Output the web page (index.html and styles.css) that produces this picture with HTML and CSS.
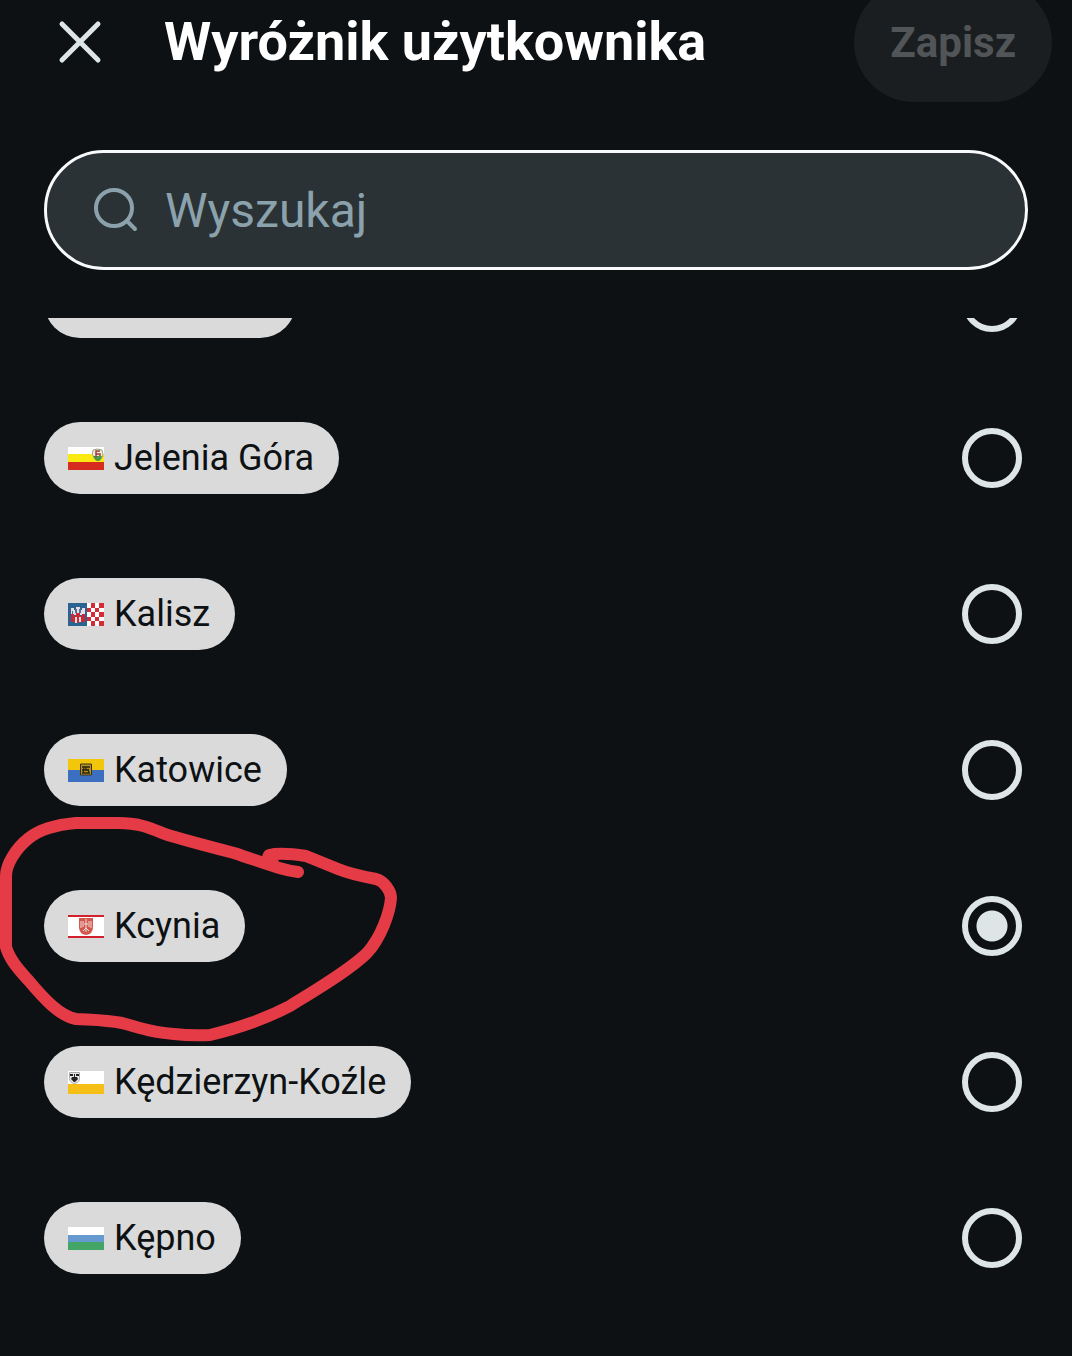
FILE: index.html
```
<!DOCTYPE html>
<html lang="pl">
<head>
    <meta charset="UTF-8">
    <meta name="viewport" content="width=device-width, initial-scale=1.0">
    <title>Wyróżnik użytkownika</title>
    <link rel="stylesheet" href="styles.css">
</head>
<body>
    <header class="header">
        <button type="button" class="close" aria-label="Zamknij">
            <svg width="44" height="44" viewBox="0 0 44 44"><path d="M4 4L40 40M40 4L4 40"/></svg>
        </button>
        <h1 class="title">Wyróżnik użytkownika</h1>
        <button type="submit" form="flair-form" class="save" disabled>Zapisz</button>
    </header>
    <label class="search">
        <svg class="search-icon" width="46" height="46" viewBox="0 0 46 46"><circle cx="21" cy="21" r="18"/><path d="M34 34L42 42"/></svg>
        <input type="search" class="search-input" placeholder="Wyszukaj" aria-label="Wyszukaj">
    </label>
    <form id="flair-form" class="flairs">
        <ul class="flair-list">
            <li class="flair">
                <label class="chip chip-blank" for="flair-0"></label>
                <input type="radio" class="radio" id="flair-0" name="flair">
            </li>
            <li class="flair">
                <label class="chip" for="flair-1">
                    <svg class="flag" viewBox="0 0 36 23">
                        <rect width="36" height="8" fill="#fff"/>
                        <rect y="7" width="36" height="9" fill="#fbea12"/>
                        <rect y="15" width="36" height="8" fill="#d62c20"/>
                        <path d="M25 3q4-2 9 0 2 6-1 9-3 3-6 0-4-4-2-9z" fill="#eef0dc" stroke="#9aa383"/>
                        <path d="M25 9h9q-1 5-4 5t-5-5z" fill="#4c9a45"/>
                        <path d="M28 10V4h4M28 7h4v2" fill="none" stroke="#a23a3a" stroke-width="1.5"/>
                    </svg>
                    Jelenia Góra
                </label>
                <input type="radio" class="radio" id="flair-1" name="flair">
            </li>
            <li class="flair">
                <label class="chip" for="flair-2">
                    <svg class="flag" viewBox="0 0 36 23">
                        <rect width="36" height="23" fill="#fff"/>
                        <rect width="19" height="23" fill="#2b6490"/>
                        <path d="M3 5h3v2h2V4h4v3h2V5h3v7H3z" fill="#e7dde2"/>
                        <path d="M3 11h3v2h2v-3h4v3h2v-2h3v8h-4v-5h-2v6H9v-6H7v5H3z" fill="#cc2936"/>
                        <path d="M7 14h2v6H7zM11 14h2v5h-2z" fill="#eadfe3"/>
                        <path d="M7 6h2v4H7zM11 6h2v4h-2zM4 8h1v3H4z" fill="#4c7296"/>
                        <path d="M23 0h4v5h-4zM31 0h5v5h-5zM19 5h4v4h-4zM27 5h4v4h-4zM23 9h4v5h-4zM31 9h5v5h-5zM19 14h4v4h-4zM27 14h4v4h-4zM23 18h4v5h-4zM31 18h5v5h-5z" fill="#d52b37"/>
                    </svg>
                    Kalisz
                </label>
                <input type="radio" class="radio" id="flair-2" name="flair">
            </li>
            <li class="flair">
                <label class="chip" for="flair-3">
                    <svg class="flag" viewBox="0 0 36 23">
                        <rect width="36" height="12" fill="#f2c60b"/>
                        <rect y="11" width="36" height="12" fill="#3d6fc0"/>
                        <path d="M12.5 5h11v11h-11z" fill="#b5921d" stroke="#3a3218"/>
                        <path d="M14 8h8M16 8l-1 6M18 8v4M14 11h7M20 10l1 4M14 14h8" fill="none" stroke="#2b2614" stroke-width="1.3"/>
                    </svg>
                    Katowice
                </label>
                <input type="radio" class="radio" id="flair-3" name="flair">
            </li>
            <li class="flair">
                <label class="chip" for="flair-4">
                    <svg class="flag" viewBox="0 0 36 23">
                        <rect width="36" height="23" fill="#fff"/>
                        <rect width="36" height="2" fill="#d3202d"/>
                        <rect y="21" width="36" height="2" fill="#d3202d"/>
                        <path d="M11 3h14v9q0 7-7 8-7-1-7-8z" fill="#d2574d"/>
                        <path d="M13 6v7M15 6v6M21 6v6M23 6v7M18 4v13M15 16l3-3 3 3M16 9h4" fill="none" stroke="#f3dfdc"/>
                    </svg>
                    Kcynia
                </label>
                <input type="radio" class="radio" id="flair-4" name="flair" checked>
                <!-- hand-drawn loop -->
                <svg class="marker" width="420" height="250" viewBox="0 0 420 250">
                    <path d="M298 72C282 70 270 65 234 53C207 46 177 38 165 34C150 28 140 23 118 23H76C53 25 39 30 29 38C15 49 6 65 6 76V147C10 161 21 172 29 181C45 200 60 216 76 219C92 220 106 220 122 223C144 229 151 232 174 234Q191 236 210 235C239 228 265 219 290 206C314 191 350 170 367 153C381 138 390 112 391 98C391 91 384 81 376 79C360 76 350 74 338 69L306 56C293 54 278 53 269 55Q266 60 273 63"/>
                </svg>
            </li>
            <li class="flair">
                <label class="chip" for="flair-5">
                    <svg class="flag" viewBox="0 0 36 23">
                        <rect width="36" height="14" fill="#fff"/>
                        <rect y="13" width="36" height="10" fill="#f5bf18"/>
                        <path d="M1.500 1.500h10v6q0 4-5 5-5-1-5-5z" fill="#e8e8e8" stroke="#aaa"/>
                        <path d="M2 3h3v2H2zM8 3h3v2H8zM4 6h5l1 2-3 3H6L3 8zM6 3h1v3H6z" fill="#222"/>
                    </svg>
                    Kędzierzyn-Koźle
                </label>
                <input type="radio" class="radio" id="flair-5" name="flair">
            </li>
            <li class="flair">
                <label class="chip" for="flair-6">
                    <svg class="flag" viewBox="0 0 36 23">
                        <rect width="36" height="8" fill="#fff"/>
                        <rect y="8" width="36" height="8" fill="#6699cf"/>
                        <rect y="15" width="36" height="8" fill="#43a566"/>
                    </svg>
                    Kępno
                </label>
                <input type="radio" class="radio" id="flair-6" name="flair">
            </li>
        </ul>
    </form>
    <script>
    document.querySelector('.flairs').scrollTop = 94;
    </script>
</body>
</html>
```

FILE: styles.css
```
* {
    box-sizing: border-box;
}
body {
    display: flex;
    flex-direction: column;
    height: 100vh;
    margin: 0;
    overflow: hidden;
    background-color: #0d1113;
    color: #fff;
    font-family: Roboto, sans-serif;
}
.header {
    display: flex;
    flex-shrink: 0;
    align-items: center;
    height: 84px;
    padding: 0 20px 0 58px;
}
.close {
    display: flex;
    padding: 0;
    border: none;
    background: none;
    cursor: pointer;
}
.close path {
    fill: none;
    stroke: #dde5e7;
    stroke-width: 5;
    stroke-linecap: round;
}
.title {
    flex: 1;
    margin: 0 0 0 62px;
    font-size: 54px;
    line-height: 64px;
    font-weight: bold;
    white-space: nowrap;
}
.save {
    height: 120px;
    padding: 0 36px;
    border: none;
    border-radius: 60px;
    background-color: #1a1e20;
    color: #515557;
    font-family: inherit;
    font-size: 42px;
    font-weight: bold;
}
.search {
    display: flex;
    flex-shrink: 0;
    align-items: center;
    gap: 26px;
    height: 120px;
    margin: 66px 44px 48px;
    padding: 0 46px;
    border: 3px solid #f7f9fa;
    border-radius: 60px;
    background-color: #2a3236;
}
.search-icon {
    flex-shrink: 0;
    fill: none;
    stroke: #8ba2ad;
    stroke-width: 4;
    stroke-linecap: round;
}
.search-input {
    flex: 1;
    min-width: 0;
    padding: 0;
    border: none;
    outline: none;
    background: none;
    color: #fff;
    font-family: inherit;
    font-size: 48px;
}
.search-input::placeholder {
    color: #8ba2ad;
    opacity: 1;
}
.flairs {
    flex: 1;
    min-height: 0;
    overflow-x: hidden;
    overflow-y: auto;
    scrollbar-width: none;
}
.flair-list {
    margin: 0;
    padding: 0 0 40px;
    list-style: none;
}
.flair {
    position: relative;
    display: flex;
    align-items: center;
    justify-content: space-between;
    height: 156px;
    padding: 0 50px 0 44px;
}
.chip {
    display: flex;
    align-items: center;
    gap: 10px;
    height: 72px;
    padding: 0 25px 0 24px;
    border-radius: 36px;
    background-color: #dadada;
    color: #0d1113;
    font-size: 36px;
    white-space: nowrap;
}
.chip-blank {
    width: 252px;
}
.flag {
    width: 36px;
    height: 23px;
}
.radio {
    appearance: none;
    width: 60px;
    height: 60px;
    margin: 0;
    border: 6px solid #dde5e7;
    border-radius: 50%;
}
.radio:checked {
    background: radial-gradient(circle, #dde5e7 15px, transparent 16px);
}
.marker {
    position: absolute;
    top: -48px;
    left: 0;
    z-index: 1;
    pointer-events: none;
}
.marker path {
    fill: none;
    stroke: #e53b47;
    stroke-width: 12;
    stroke-linecap: round;
    stroke-linejoin: round;
}
```
